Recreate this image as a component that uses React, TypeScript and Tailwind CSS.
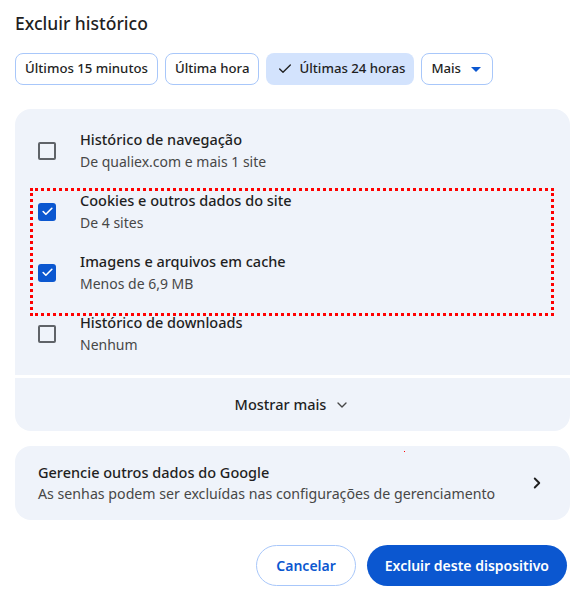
import { Check, ChevronDown, ChevronRight } from "lucide-react"

const chips = [
  { label: "Últimos 15 minutos", active: false },
  { label: "Última hora", active: false },
  { label: "Últimas 24 horas", active: true },
]

const rows = [
  { title: "Histórico de navegação", sub: "De qualiex.com e mais 1 site", checked: false },
  { title: "Cookies e outros dados do site", sub: "De 4 sites", checked: true },
  { title: "Imagens e arquivos em cache", sub: "Menos de 6,9 MB", checked: true },
  { title: "Histórico de downloads", sub: "Nenhum", checked: false },
]

function Box({ checked }: { checked: boolean }) {
  if (checked) {
    return (
      <div className="w-[18px] h-[18px] rounded-[3px] bg-[#0b57d0] flex items-center justify-center">
        <Check size={13} strokeWidth={3} className="text-white" />
      </div>
    )
  }
  return <div className="w-[18px] h-[18px] rounded-[2px] border-2 border-[#5f6368]" />
}

export default function App() {
  return (
    <div
      className="relative w-[585px] h-[595px] bg-white text-[#1f1f1f] px-[15px] pt-[10px]"
      style={{ fontFamily: '"Noto Sans", "Open Sans", sans-serif' }}
    >
      <h1 className="text-[17.5px] font-medium leading-[26px]">Excluir histórico</h1>

      <div className="flex gap-[7px] mt-[17px]">
        {chips.map((c) => (
          <div
            key={c.label}
            className={`h-[32px] rounded-[8px] flex items-center text-[13.2px] font-medium ${
              c.active ? "bg-[#d3e3fd] pl-[11px] pr-[9px] gap-[6px]" : "border border-[#a8c7fa] px-[9px]"
            }`}
          >
            {c.active && <Check size={16} strokeWidth={2} className="text-[#1f1f1f]" />}
            {c.label}
          </div>
        ))}
        <div className="h-[32px] rounded-[8px] border border-[#a8c7fa] pl-[9px] pr-[11px] flex items-center gap-[10px] text-[13.2px] font-medium">
          Mais
          <svg width="10" height="5" viewBox="0 0 10 5">
            <path d="M0 0 L10 0 L5 5 Z" fill="#0b57d0" />
          </svg>
        </div>
      </div>

      <div className="mt-[24px] bg-[#eff3fa] rounded-t-[16px] pt-[11px] pb-[11px]">
        {rows.map((r) => (
          <div key={r.title} className="flex items-center h-[61px] pl-[23px]">
            <Box checked={r.checked} />
            <div className="ml-[24px] flex flex-col">
              <span className="text-[14.5px] font-medium leading-[20px]">{r.title}</span>
              <span className="mt-[3px] text-[14px] text-[#474747] leading-[20px]">{r.sub}</span>
            </div>
          </div>
        ))}
      </div>

      <div className="mt-[3px] h-[53px] bg-[#eff3fa] rounded-b-[16px] flex items-center justify-center gap-[8px] text-[14.5px] font-medium">
        Mostrar mais
        <ChevronDown size={16} strokeWidth={2} className="text-[#474747]" />
      </div>

      <div className="mt-[15px] h-[74px] bg-[#eff3fa] rounded-[16px] flex items-center pl-[23px] pr-[24px]">
        <div className="flex flex-col flex-1">
          <span className="text-[14.5px] font-medium leading-[22px]">Gerencie outros dados do Google</span>
          <span className="text-[14.2px] text-[#474747] leading-[22px]">
            As senhas podem ser excluídas nas configurações de gerenciamento
          </span>
        </div>
        <ChevronRight size={18} strokeWidth={2.5} className="text-[#1f1f1f]" />
      </div>

      <div className="flex justify-end gap-[11px] mt-[25px] pr-[3px]">
        <button className="h-[41px] px-[19px] rounded-full border border-[#a8c7fa] text-[#0b57d0] text-[14px] font-semibold">
          Cancelar
        </button>
        <button className="h-[41px] px-[18px] rounded-full bg-[#0b57d0] text-white text-[14px] font-semibold">
          Excluir deste dispositivo
        </button>
      </div>

      <div className="absolute left-[30px] top-[188px] w-[524px] h-[128px] border-[3px] border-dotted border-[#ff0000] pointer-events-none" />
      <div className="absolute left-[404px] top-[451px] w-[1px] h-[1px] bg-[#ff0000]" />
    </div>
  )
}
